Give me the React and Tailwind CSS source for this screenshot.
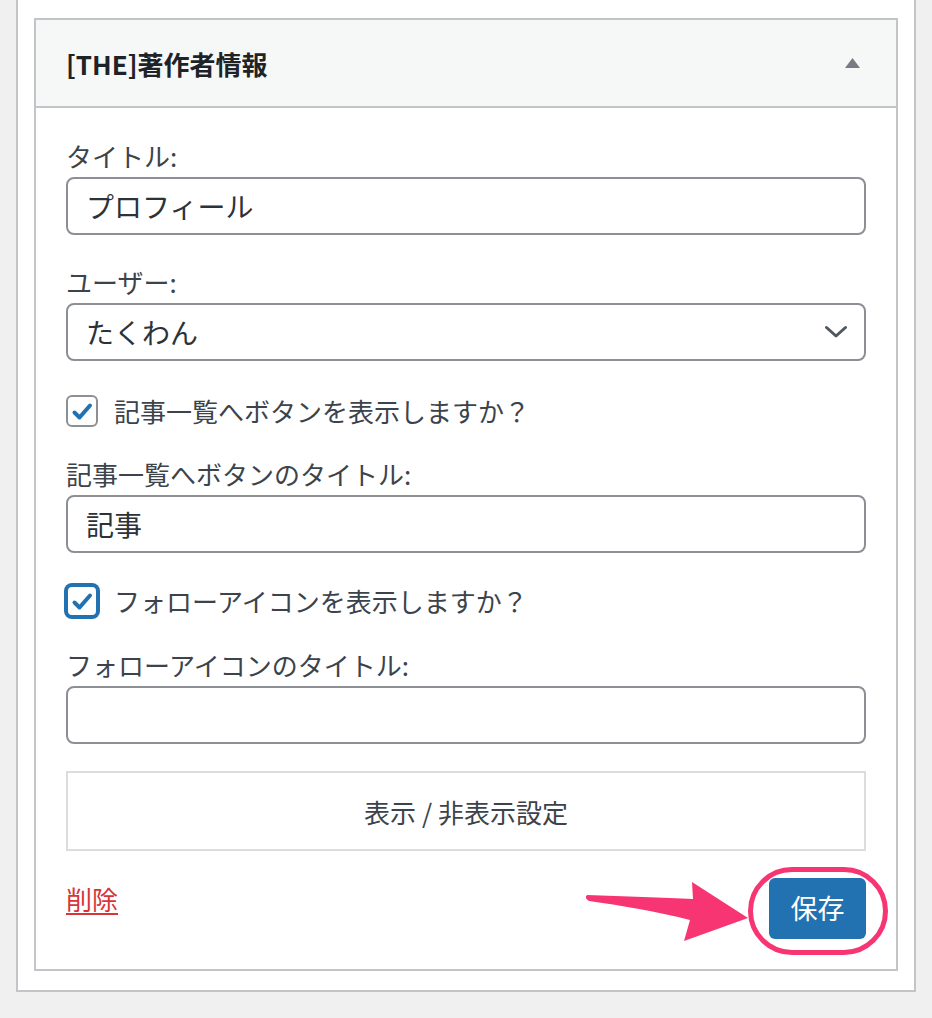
import { useState } from "react";

const FONT = "font-['Noto_Sans_CJK_JP','Noto_Sans',sans-serif]";

/**
 * Checkbox row in the WordPress widget style.
 */
function CheckRow({ label, checked, focused, onToggle }) {
  return (
    <label className="flex items-center gap-4 leading-[35px] cursor-pointer" onClick={onToggle}>
      <span
        className={`relative w-8 h-8 shrink-0 rounded-[6px] border-2 bg-white
          ${focused ? "border-[#2271b1] ring-2 ring-[#2271b1]" : "border-[#8c8f94]"}`}
      >
        {checked && (
          <svg viewBox="0 0 28 28" className="absolute inset-0 w-full h-full">
            <path d="M6.5 15.5 L11.5 20.5 L22 8.5" fill="none" stroke="#2271b1" strokeWidth="4" strokeLinecap="round" strokeLinejoin="round" />
          </svg>
        )}
      </span>
      <span className="text-[26px] text-[#3c434a]">{label}</span>
    </label>
  );
}

/**
 * Text field with a label above it.
 */
function Field({ label, value, onChange, className = "" }) {
  return (
    <div className={className}>
      <div className="text-[26px] leading-[35px] text-[#3c434a] mb-1">{label}</div>
      <input
        value={value}
        onChange={(e) => onChange(e.target.value)}
        className={`${FONT} w-full h-[58px] px-[18px] rounded-[8px] border-2 border-[#8c8f94] bg-white text-[28px] text-[#2c3338] outline-none`}
      />
    </div>
  );
}

export default function App() {
  const [title, setTitle] = useState("プロフィール");
  const [postTitle, setPostTitle] = useState("記事");
  const [followTitle, setFollowTitle] = useState("");
  const [showPosts, setShowPosts] = useState(true);
  const [showFollow, setShowFollow] = useState(true);

  return (
    <div className={`${FONT} min-h-[1018px] bg-[#f0f0f1] overflow-hidden`}>
      {/* Outer widget area (top cut off) */}
      <div className="ml-4 w-[900px] bg-white border-x-2 border-b-2 border-[#c3c4c7] px-4 pt-[18px] pb-[19px]">
        {/* Widget box */}
        <div className="border-2 border-[#c3c4c7] bg-white">
          {/* Header */}
          <div className="h-[88px] bg-[#f6f7f7] border-b-2 border-[#c3c4c7] flex items-center justify-between pl-[30px] pr-[36px]">
            <h3 className="text-[26px] font-bold text-[#1d2327]">[THE]著作者情報</h3>
            <svg width="15" height="10" viewBox="0 0 15 10">
              <polygon points="7.5,0 15,10 0,10" fill="#787c82" />
            </svg>
          </div>

          {/* Body */}
          <div className="px-[30px] pt-[30px] pb-[30px]">
            <Field label="タイトル:" value={title} onChange={setTitle} />

            <div className="mt-[29px]">
              <div className="text-[26px] leading-[35px] text-[#3c434a] mb-1">ユーザー:</div>
              <div className="relative h-[58px] rounded-[8px] border-2 border-[#8c8f94] bg-white flex items-center px-[18px]">
                <span className="text-[28px] text-[#2c3338]">たくわん</span>
                <svg className="absolute right-[16px] top-1/2 -translate-y-1/2" width="24" height="14" viewBox="0 0 24 14">
                  <path d="M2.5 2.5 L12 11 L21.5 2.5" fill="none" stroke="#50575e" strokeWidth="3" strokeLinecap="round" strokeLinejoin="round" />
                </svg>
              </div>
            </div>

            <div className="mt-[32px]">
              <CheckRow label="記事一覧へボタンを表示しますか？" checked={showPosts} onToggle={() => setShowPosts(!showPosts)} />
            </div>

            <Field className="mt-[28px]" label="記事一覧へボタンのタイトル:" value={postTitle} onChange={setPostTitle} />

            <div className="mt-[30px]">
              <CheckRow label="フォローアイコンを表示しますか？" checked={showFollow} focused onToggle={() => setShowFollow(!showFollow)} />
            </div>

            <Field className="mt-[29px]" label="フォローアイコンのタイトル:" value={followTitle} onChange={setFollowTitle} />

            {/* Display settings toggle */}
            <button className="mt-[27px] w-full h-[80px] border-2 border-[#dcdcde] bg-white text-[26px] text-[#3c434a]">
              表示 / 非表示設定
            </button>

            {/* Footer */}
            <div className="relative mt-[27px] flex items-start justify-between">
              <a href="#" className="mt-[3px] text-[26px] leading-[35px] text-[#d63638] underline underline-offset-[3px]">削除</a>

              {/* Annotation arrow */}
              <svg className="absolute left-[518px] top-0" width="170" height="66" viewBox="0 0 170 66">
                <path
                  d="M3 17 C40 18 80 20 109 21 L108 4 L164 40 L100 63 L106 42 C75 34 35 27 5 23 Q0 20 3 17 Z"
                  fill="#f73572"
                />
              </svg>

              <div className="relative">
                <div className="absolute -left-[21px] -top-[11px] -right-[22px] -bottom-[16px] rounded-[44px] border-[5px] border-[#f73572]" />
                <button className="relative w-[97px] h-[61px] rounded-[6px] bg-[#2271b1] text-white text-[27px]">保存</button>
              </div>
            </div>
          </div>
        </div>
      </div>
    </div>
  );
}
